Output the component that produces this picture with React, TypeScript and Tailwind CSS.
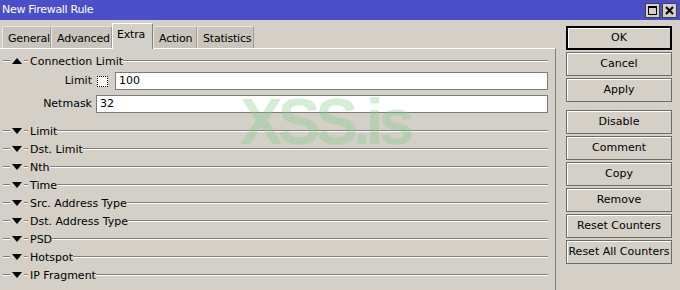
import React from 'react';

const tabs: [string, number][] = [
  ['General', 49],
  ['Advanced', 61],
  ['Extra', 41],
  ['Action', 44],
  ['Statistics', 57],
];
const sections = ['Limit', 'Dst. Limit', 'Nth', 'Time', 'Src. Address Type', 'Dst. Address Type', 'PSD', 'Hotspot', 'IP Fragment'];
const buttons = [
  ['OK', 'Cancel', 'Apply'],
  ['Disable', 'Comment', 'Copy', 'Remove', 'Reset Counters', 'Reset All Counters'],
];

function Etch({ className = '' }: { className?: string }) {
  return <div className={`h-[2px] border-t border-t-[#808080] border-b border-b-white ${className}`} />;
}

function SectionHeader({ label, open }: { label: string; open?: boolean }) {
  return (
    <div className="h-[18px] flex items-center pr-[7px]">
      <Etch className="ml-[3px] w-[7px]" />
      <svg width="10" height="6" viewBox="0 0 10 6" className="mx-[2px]">
        {open ? <path d="M0 6 L5 0 L10 6 Z" fill="#000" /> : <path d="M0 0 L10 0 L5 6 Z" fill="#000" />}
      </svg>
      <Etch className="w-[4px]" />
      <span className="ml-[2px] leading-none">{label}</span>
      <Etch className="flex-1" />
    </div>
  );
}

export default function App() {
  return (
    <div className="relative w-[680px] h-[290px] overflow-hidden bg-[#d4d0c8] text-[11px] text-black flex flex-col" style={{ fontFamily: '"DejaVu Sans", sans-serif' }}>
      {/* Title bar */}
      <div className="h-[20px] bg-[#4a4fc8] flex items-center justify-between pl-[2px] pr-[3px]">
        <span className="text-white text-[11px] tracking-[-0.3px]">New Firewall Rule</span>
        <div className="flex gap-[2px]">
          <div className="w-[15px] h-[15px] bg-[#d4d0c8] border border-[#404040] flex items-center justify-center">
            <svg width="9" height="9" viewBox="0 0 9 9">
              <rect x="0.5" y="0.5" width="8" height="8" fill="none" stroke="#000" />
              <rect x="0" y="0" width="9" height="2" fill="#000" />
            </svg>
          </div>
          <div className="w-[15px] h-[15px] bg-[#d4d0c8] border border-[#404040] flex items-center justify-center">
            <svg width="9" height="9" viewBox="0 0 9 9">
              <path d="M1 1 L8 8 M8 1 L1 8" stroke="#000" strokeWidth="2" />
            </svg>
          </div>
        </div>
      </div>

      <div className="flex-1 flex">
        {/* Left side */}
        <div className="w-[556px] flex flex-col">
          <div className="h-[28px] flex items-end pl-[2px]">
            {tabs.map(([t, w]) =>
              t === 'Extra' ? (
                <div key={t} style={{ width: w }} className="h-[26px] -mb-[1px] pl-[4px] pt-[3px] bg-[#d4d0c8] border-t border-l border-white border-r border-r-[#808080] relative z-10 whitespace-nowrap tracking-[-0.2px]">
                  {t}
                </div>
              ) : (
                <div key={t} style={{ width: w }} className="h-[22px] pl-[5px] pt-[4px] bg-[#c9c5bd] border-t border-l border-[#e8e6e2] border-r border-r-[#a09c96] whitespace-nowrap tracking-[-0.2px]">
                  {t}
                </div>
              )
            )}
          </div>

          <div className="flex-1 border-t border-white border-r border-r-[#808080] pt-[3px]">
            <SectionHeader label="Connection Limit" open />
            <div className="h-[18px] mt-[2px] flex items-center pr-[7px]">
              <span className="w-[92px] text-right">Limit</span>
              <div className="ml-[5px] w-[11px] h-[11px] bg-white border border-dotted border-black" />
              <div className="ml-[7px] flex-1 h-[18px] bg-white border border-[#7c7c7c] flex items-center pl-[3px]">100</div>
            </div>
            <div className="h-[18px] mt-[5px] flex items-center pr-[7px]">
              <span className="w-[92px] text-right">Netmask</span>
              <div className="ml-[4px] flex-1 h-[18px] bg-white border border-[#7c7c7c] flex items-center pl-[3px]">32</div>
            </div>
            <div className="mt-[9px]">
              {sections.map((s) => (
                <SectionHeader key={s} label={s} />
              ))}
            </div>
          </div>
        </div>

        {/* Right side buttons */}
        <div className="flex-1 pl-[10px] pt-[6px] flex flex-col gap-[8px]">
          {buttons.map((group, gi) => (
            <div key={gi} className="flex flex-col gap-[2px]">
              {group.map((b) => (
                <div
                  key={b}
                  className={`w-[106px] h-[24px] flex items-center justify-center whitespace-nowrap ${
                    b === 'OK'
                      ? 'border-2 border-black shadow-[inset_1px_1px_0_#fff]'
                      : 'border border-[#6e6c68] shadow-[inset_1px_1px_0_#fff]'
                  }`}
                >
                  {b}
                </div>
              ))}
            </div>
          ))}
        </div>
      </div>

      {/* watermark */}
      <div
        className="absolute left-[240px] top-[90px] text-[64px] leading-none font-bold tracking-[-5px] text-[#86cc8c] opacity-35 pointer-events-none"
        style={{ fontFamily: '"Liberation Sans", Arial, sans-serif' }}
      >
        XSS.is
      </div>
    </div>
  );
}
